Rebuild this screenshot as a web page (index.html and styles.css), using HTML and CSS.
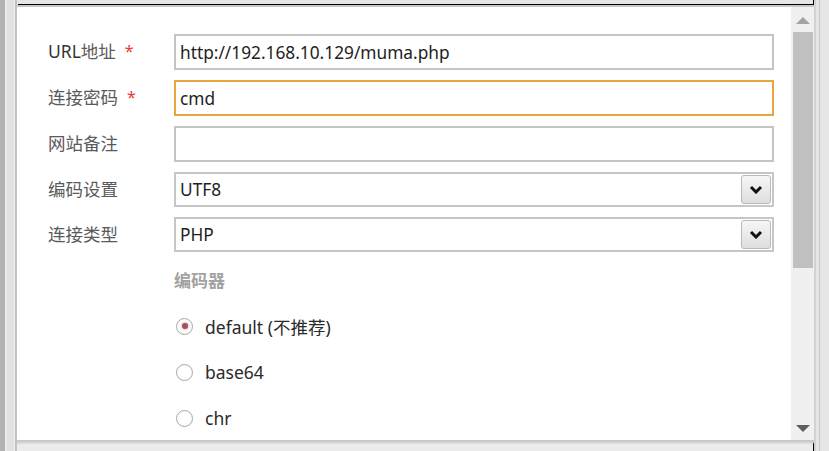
FILE: index.html
```html
<!DOCTYPE html>
<html>
<head>
<meta charset="utf-8">
<link rel="stylesheet" href="styles.css">
</head>
<body>
<div class="frame">
  <div class="lstrip"></div>
  <div class="main">
    <div class="tophead"></div>
    <div class="panel">
      <div class="content">
        <div class="form">
          <div class="label"><span class="lat">URL</span>地址<span class="req">*</span></div>
          <div class="field">http://192.168.10.129/muma.php</div>
          <div class="label">连接密码<span class="req">*</span></div>
          <div class="field focus">cmd</div>
          <div class="label">网站备注</div>
          <div class="field"></div>
          <div class="label">编码设置</div>
          <div class="select"><span class="val">UTF8</span><span class="btn"><svg width="14" height="9" viewBox="0 0 14 9"><path d="M2 2 L7 7 L12 2" fill="none" stroke="#111" stroke-width="3"/></svg></span></div>
          <div class="label">连接类型</div>
          <div class="select"><span class="val">PHP</span><span class="btn"><svg width="14" height="9" viewBox="0 0 14 9"><path d="M2 2 L7 7 L12 2" fill="none" stroke="#111" stroke-width="3"/></svg></span></div>
        </div>
        <div class="encoder">
          <div class="enc-title">编码器</div>
          <div class="radio-row"><span class="radio checked"></span><span class="rtext">default (不推荐)</span></div>
          <div class="radio-row"><span class="radio"></span><span class="rtext">base64</span></div>
          <div class="radio-row"><span class="radio"></span><span class="rtext">chr</span></div>
        </div>
      </div>
      <div class="scrollbar">
        <div class="arrow up"></div>
        <div class="thumb"></div>
        <div class="track-rest"></div>
        <div class="arrow down"></div>
      </div>
    </div>
    <div class="foot"></div>
  </div>
  <div class="rstrip"></div>
</div>
</body>
</html>
```
FILE: styles.css
```css
html, body {
  margin: 0;
  padding: 0;
}
body {
  width: 829px;
  height: 451px;
  overflow: hidden;
  background: #e6e6e6;
  font-family: "Noto Sans", "Noto Sans CJK SC", sans-serif;
}
.frame {
  display: flex;
  height: 451px;
}
.lstrip {
  width: 17px;
  flex: none;
  background: linear-gradient(to right, #b3b3b3 0 5px, #ebebeb 5px 7px, #e1e1e1 7px 14px, #eeeeee 14px 15px, #c3c3c3 15px 17px);
}
.main {
  width: 797px;
  flex: none;
  display: flex;
  flex-direction: column;
}
.tophead {
  height: 4px;
  margin-left: 1px;
  border-right: 1px solid #000;
  border-bottom: 1px solid #000;
  background: #e6e6e6;
}
.panel {
  display: flex;
  height: 433px;
  border-top: 2px solid #c6c6c6;
  border-bottom: 2px solid #c8c8c8;
}
.content {
  width: 774px;
  box-sizing: border-box;
  background: #fff;
  padding: 27px 17px 0 31px;
  overflow: hidden;
}
.form {
  display: grid;
  grid-template-columns: 126px 600px;
  row-gap: 10px;
}
.label {
  display: flex;
  align-items: center;
  font-size: 17.5px;
  color: #5a5a5a;
  padding-bottom: 3px;
}
.lat {
  color: #333;
}
.req {
  color: #f03535;
  font-size: 16px;
  margin-left: 9px;
}
.field {
  height: 36px;
  box-sizing: border-box;
  border: 2px solid #c4c4c4;
  padding: 0 4px;
  font-size: 17.3px;
  color: #1e1e1e;
  display: flex;
  align-items: center;
}
.field.focus {
  border-color: #e7a73b;
}
.select {
  height: 35px;
  box-sizing: border-box;
  border: 2px solid #c6c6c6;
  padding: 0 1px 0 4px;
  font-size: 17.3px;
  color: #1e1e1e;
  display: flex;
  align-items: center;
  justify-content: space-between;
}
.btn {
  width: 30px;
  height: 29px;
  box-sizing: border-box;
  border: 1px solid #b9b9b9;
  border-radius: 3px;
  background: linear-gradient(#f6f6f6, #dedede);
  display: flex;
  align-items: center;
  justify-content: center;
}
.encoder {
  margin-left: 126px;
  margin-top: 17px;
}
.enc-title {
  height: 24px;
  line-height: 24px;
  font-size: 17px;
  font-weight: bold;
  color: #a2a2a2;
  margin-bottom: 10px;
}
.radio-row {
  height: 46px;
  display: flex;
  align-items: center;
}
.radio {
  width: 17px;
  height: 17px;
  box-sizing: border-box;
  border: 1px solid #a9a9a9;
  border-radius: 50%;
  background: radial-gradient(circle, #ffffff 55%, #ececec 100%);
  margin-left: 2px;
  margin-right: 12px;
  display: flex;
  align-items: center;
  justify-content: center;
}
.radio.checked::after {
  content: "";
  width: 6px;
  height: 6px;
  border-radius: 50%;
  background: #a3505e;
  box-shadow: 0 0 2px 1px #e6c8cc;
}
.rtext {
  font-size: 17.5px;
  color: #2a2a2a;
}
.scrollbar {
  width: 23px;
  flex: none;
  background: #f0f0f0;
  display: flex;
  flex-direction: column;
  align-items: center;
}
.arrow {
  width: 0;
  height: 0;
  border-left: 7px solid transparent;
  border-right: 7px solid transparent;
  flex: none;
}
.arrow.up {
  border-bottom: 7px solid #a3a3a3;
  margin-top: 10px;
  margin-bottom: 8px;
}
.thumb {
  width: 20px;
  height: 236px;
  background: #c0c0c0;
  margin-left: 1px;
  flex: none;
}
.track-rest {
  flex: 1;
}
.arrow.down {
  border-top: 7px solid #5e5e5e;
  margin-bottom: 8px;
}
.foot {
  flex: 1;
  border-top: 2px solid #dadada;
  border-right: 1px solid #000;
  background: #ececec;
}
.rstrip {
  flex: 1;
  background: linear-gradient(to right, #d2d2d2 0 2px, #e6e6e6 2px 5px, #c8c8c8 5px 6px, #e6e6e6 6px);
}
```
